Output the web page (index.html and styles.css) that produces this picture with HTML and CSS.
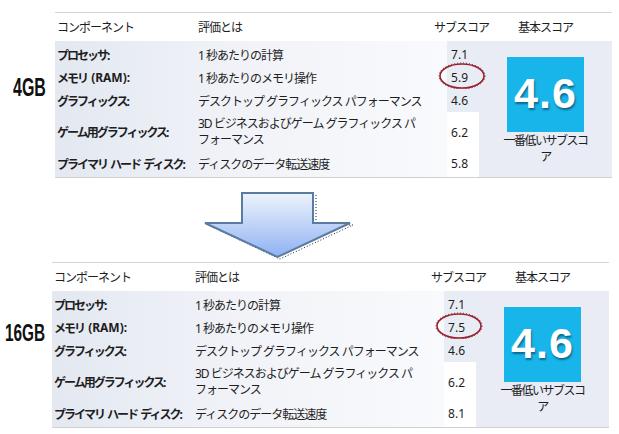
FILE: index.html
```html
<!DOCTYPE html>
<html lang="ja">
<head>
  <meta charset="UTF-8">
  <meta name="viewport" content="width=device-width, initial-scale=1.0">
  <title>Windows エクスペリエンス インデックス 4GB / 16GB</title>
  <link rel="stylesheet" href="styles.css">
</head>
<body>
  <!-- 4GB -->
  <section class="block">
    <div class="mem"><span class="mem-label">4GB</span></div>
    <div class="wei">
      <div class="wei-head">
        <span class="h-comp">コンポーネント</span>
        <span class="h-desc">評価とは</span>
        <span class="h-sub">サブスコア</span>
        <span class="h-base">基本スコア</span>
      </div>
      <div class="wei-body">
        <div class="rows">
          <div class="row first"><b class="comp">プロセッサ:</b><span class="desc">1 秒あたりの計算</span><span class="sub hi">7.1</span></div>
          <div class="row"><b class="comp">メモリ <span class="latin">(RAM):</span></b><span class="desc">1 秒あたりのメモリ操作</span><span class="sub hi">5.9
            <svg class="circle" width="50" height="30" viewBox="0 0 50 30"><ellipse cx="25" cy="15" rx="23" ry="13" fill="none" stroke="#333" stroke-width="1" stroke-dasharray="1 2"/><ellipse cx="25" cy="15" rx="22" ry="12" fill="none" stroke="#a11e2c" stroke-width="1.6"/></svg>
          </span></div>
          <div class="row"><b class="comp">グラフィックス:</b><span class="desc">デスクトップ グラフィックス パフォーマンス</span><span class="sub hi">4.6</span></div>
          <div class="row tall"><b class="comp">ゲーム用グラフィックス:</b><span class="desc two"><span class="line">3D ビジネスおよびゲーム グラフィックス パ</span><span class="line">フォーマンス</span></span><span class="sub">6.2</span></div>
          <div class="row last"><b class="comp">プライマリ ハード ディスク:</b><span class="desc">ディスクのデータ転送速度</span><span class="sub">5.8</span></div>
        </div>
        <div class="base">
          <div class="base-box">4.6</div>
          <div class="base-note">一番低いサブスコ<br>ア</div>
        </div>
      </div>
    </div>
  </section>

  <div class="arrow">
    <svg width="619" height="84" viewBox="0 0 619 84">
      <defs>
        <linearGradient id="arrowFill" x1="0" y1="0" x2="0" y2="1">
          <stop offset="0" stop-color="#eef3fc"/>
          <stop offset="1" stop-color="#8fb2f2"/>
        </linearGradient>
      </defs>
      <path d="M316 17 V47 H353 L280 81 L208 47 H245" fill="none" stroke="#222" stroke-width="1" stroke-dasharray="1 2"/>
      <path d="M242 15 H313 V45 H350 L277.5 79 L205 45 H242 Z" fill="url(#arrowFill)" stroke="#5b7ca2" stroke-width="2" stroke-linejoin="miter"/>
    </svg>
  </div>

  <!-- 16GB -->
  <section class="block second">
    <div class="mem"><span class="mem-label">16GB</span></div>
    <div class="wei">
      <div class="wei-head">
        <span class="h-comp">コンポーネント</span>
        <span class="h-desc">評価とは</span>
        <span class="h-sub">サブスコア</span>
        <span class="h-base">基本スコア</span>
      </div>
      <div class="wei-body">
        <div class="rows">
          <div class="row first"><b class="comp">プロセッサ:</b><span class="desc">1 秒あたりの計算</span><span class="sub hi">7.1</span></div>
          <div class="row"><b class="comp">メモリ <span class="latin">(RAM):</span></b><span class="desc">1 秒あたりのメモリ操作</span><span class="sub hi">7.5
            <svg class="circle" width="50" height="30" viewBox="0 0 50 30"><ellipse cx="25" cy="15" rx="23" ry="13" fill="none" stroke="#333" stroke-width="1" stroke-dasharray="1 2"/><ellipse cx="25" cy="15" rx="22" ry="12" fill="none" stroke="#a11e2c" stroke-width="1.6"/></svg>
          </span></div>
          <div class="row"><b class="comp">グラフィックス:</b><span class="desc">デスクトップ グラフィックス パフォーマンス</span><span class="sub hi">4.6</span></div>
          <div class="row tall"><b class="comp">ゲーム用グラフィックス:</b><span class="desc two"><span class="line">3D ビジネスおよびゲーム グラフィックス パ</span><span class="line">フォーマンス</span></span><span class="sub">6.2</span></div>
          <div class="row last"><b class="comp">プライマリ ハード ディスク:</b><span class="desc">ディスクのデータ転送速度</span><span class="sub">8.1</span></div>
        </div>
        <div class="base">
          <div class="base-box">4.6</div>
          <div class="base-note">一番低いサブスコ<br>ア</div>
        </div>
      </div>
    </div>
  </section>
</body>
</html>
```

FILE: styles.css
```css
body {
  margin: 0;
  background-color: #fff;
  font-family: "Noto Sans", "Noto Sans CJK JP", sans-serif;
  font-size: 12px;
  color: #1e1e1e;
}

.block {
  display: flex;
  margin-top: 12px;
}

.block.second {
  margin-top: 0;
}

.mem {
  width: 55px;
  flex: none;
}

.second .mem {
  width: 52px;
}

.mem-label {
  display: inline-block;
  margin: 63px 0 0 13px;
  font-family: "Liberation Sans", Arial, sans-serif;
  font-weight: bold;
  font-size: 25px;
  line-height: 25px;
  color: #111;
  transform: scaleX(0.64);
  transform-origin: left top;
}

.second .mem-label {
  margin: 59px 0 0 5px;
  font-size: 24px;
  line-height: 24px;
}

.wei {
  width: 557px;
  border-top: 1px solid #d6d6d6;
  border-bottom: 1px solid #d0d0d0;
}

.wei-head {
  display: grid;
  grid-template-columns: 143px 236px 45px 133px;
  height: 28px;
  align-items: center;
  letter-spacing: -1px;
  white-space: nowrap;
}

.h-comp {
  padding-left: 2px;
}

.h-sub {
  text-align: right;
  padding-right: 1px;
}

.h-base {
  text-align: center;
}

.wei-body {
  display: flex;
  height: 136px;
}

.rows {
  width: 424px;
  background: linear-gradient(to right, #e3e8f1, #f1f3f8 45%, #fafbfd);
}

.row {
  display: grid;
  grid-template-columns: 143px 249px 32px;
  height: 23px;
}

.row.first,
.row.last {
  height: 25px;
}

.row.tall {
  height: 40px;
}

.row > * {
  display: flex;
  align-items: center;
}

.row.first > * {
  padding-top: 2px;
}

.row.last > * {
  padding-bottom: 2px;
}

.comp {
  padding-left: 2px;
  font-weight: bold;
  letter-spacing: -2px;
  word-spacing: 2px;
  white-space: pre;
}

.comp .latin {
  margin-left: 1px;
  letter-spacing: 0;
  word-spacing: 0;
}

.desc {
  letter-spacing: -1px;
  white-space: nowrap;
}

.desc.two {
  flex-direction: column;
  align-items: flex-start;
  justify-content: center;
}

.desc .line {
  display: block;
  line-height: 16px;
}

.sub {
  position: relative;
  justify-content: flex-end;
  padding-right: 11px;
  background-color: #fff;
}

.sub.hi {
  background-color: #e8ecf5;
}

.circle {
  position: absolute;
  left: -10px;
  top: -5px;
}

.base {
  width: 133px;
  background-color: #e9ecf5;
  display: flex;
  flex-direction: column;
  align-items: center;
}

.base-box {
  width: 77px;
  height: 75px;
  margin-top: 16px;
  background-color: #18b5ea;
  display: flex;
  justify-content: center;
  align-items: center;
  padding-bottom: 3px;
  box-sizing: border-box;
  font-family: "Liberation Sans", Arial, sans-serif;
  font-weight: bold;
  font-size: 43px;
  letter-spacing: 1px;
  color: #fff;
  text-shadow: 1px 2px 2px rgba(0, 40, 70, 0.55);
}

.base-note {
  margin-top: 1px;
  line-height: 16px;
  letter-spacing: -1.5px;
  text-align: center;
  white-space: nowrap;
}

.arrow svg {
  display: block;
}
```
